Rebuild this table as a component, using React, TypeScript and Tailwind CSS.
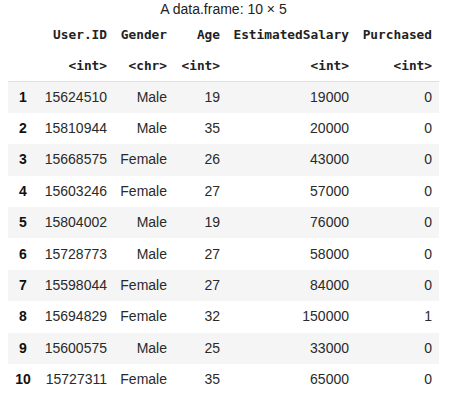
import React from "react";

const rows: [number, string, number, number, number][] = [
  [15624510, "Male", 19, 19000, 0],
  [15810944, "Male", 35, 20000, 0],
  [15668575, "Female", 26, 43000, 0],
  [15603246, "Female", 27, 57000, 0],
  [15804002, "Male", 19, 76000, 0],
  [15728773, "Male", 27, 58000, 0],
  [15598044, "Female", 27, 84000, 0],
  [15694829, "Female", 32, 150000, 1],
  [15600575, "Male", 25, 33000, 0],
  [15727311, "Female", 35, 65000, 0],
];

const headers = ["User.ID", "Gender", "Age", "EstimatedSalary", "Purchased"];
const types = ["<int>", "<chr>", "<int>", "<int>", "<int>"];

export default function App() {
  const mono = "font-['DejaVu_Sans_Mono',monospace] text-[12.8px] font-bold text-[#222]";
  return (
    <div className="w-[456px] h-[399px] bg-white px-[8px] font-['Liberation_Sans',Arial,sans-serif] text-[14px] text-[#2a2a2a]">
      <table className="table-fixed border-collapse w-[431px]">
        <colgroup>
          <col className="w-[30px]" />
          <col className="w-[76px]" />
          <col className="w-[60px]" />
          <col className="w-[53px]" />
          <col className="w-[129px]" />
          <col className="w-[83px]" />
        </colgroup>
        <caption className="h-[19px] pt-[1px] text-center leading-[16px] text-[#222]">
          A data.frame: 10 × 5
        </caption>
        <thead className="border-b border-[#e0e0e0]">
          <tr className="h-[31.4px]">
            <th className="p-0"></th>
            {headers.map((h) => (
              <th key={h} className={`p-0 pr-[7px] text-right align-middle ${mono}`}>
                {h}
              </th>
            ))}
          </tr>
          <tr className="h-[31px]">
            <th className="p-0"></th>
            {types.map((t, i) => (
              <th key={i} className={`p-0 pr-[7px] text-right align-middle ${mono}`}>
                {t}
              </th>
            ))}
          </tr>
        </thead>
        <tbody>
          {rows.map((r, i) => (
            <tr key={i} className={`h-[31.4px] ${i % 2 === 0 ? "bg-[#f5f5f5]" : "bg-white"}`}>
              <th className="p-0 text-center align-middle font-bold text-[#111]">{i + 1}</th>
              {r.map((v, j) => (
                <td key={j} className="p-0 pr-[7px] text-right align-middle">
                  {v}
                </td>
              ))}
            </tr>
          ))}
        </tbody>
      </table>
    </div>
  );
}
